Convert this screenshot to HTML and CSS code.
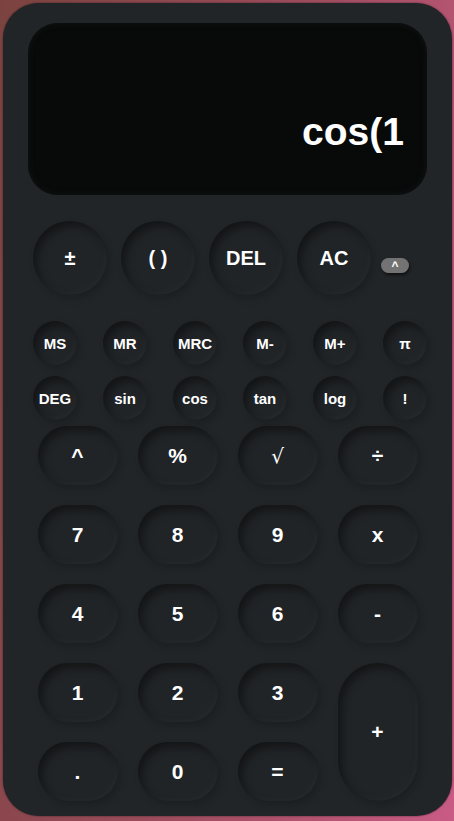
FILE: index.html
```html
<!DOCTYPE html>
<html lang="en">
<head>
<meta charset="utf-8">
<title>Calculator</title>
<link rel="stylesheet" href="styles.css">
</head>
<body>
<div class="calc">
  <div class="display"><span class="expr">cos(1</span></div>

  <div class="top-row">
    <div class="top-keys">
      <button class="key big">±</button>
      <button class="key big">( )</button>
      <button class="key big">DEL</button>
      <button class="key big">AC</button>
    </div>
    <button class="toggle">^</button>
  </div>

  <div class="sci">
    <button class="key small">MS</button>
    <button class="key small">MR</button>
    <button class="key small">MRC</button>
    <button class="key small">M-</button>
    <button class="key small">M+</button>
    <button class="key small">π</button>
    <button class="key small">DEG</button>
    <button class="key small">sin</button>
    <button class="key small">cos</button>
    <button class="key small">tan</button>
    <button class="key small">log</button>
    <button class="key small">!</button>
  </div>

  <div class="pad">
    <button class="key oval">^</button>
    <button class="key oval">%</button>
    <button class="key oval"><span class="thin">√</span></button>
    <button class="key oval">÷</button>
    <button class="key oval">7</button>
    <button class="key oval">8</button>
    <button class="key oval">9</button>
    <button class="key oval">x</button>
    <button class="key oval">4</button>
    <button class="key oval">5</button>
    <button class="key oval">6</button>
    <button class="key oval">-</button>
    <button class="key oval">1</button>
    <button class="key oval">2</button>
    <button class="key oval">3</button>
    <button class="key oval plus">+</button>
    <button class="key oval">.</button>
    <button class="key oval">0</button>
    <button class="key oval">=</button>
  </div>
</div>
</body>
</html>
```

FILE: styles.css
```css
html, body {
  margin: 0;
  height: 100%;
}
body {
  padding: 3px 2px 0 3px;
  box-sizing: border-box;
  background: linear-gradient(100deg, #7b433f 0%, #9c4c5c 50%, #c95b84 100%);
  font-family: "Liberation Sans", Arial, sans-serif;
  font-weight: bold;
  color: #fff;
}
.calc {
  width: 449px;
  height: 813px;
  box-sizing: border-box;
  padding: 20px 25px 0 25px;
  background: #222528;
  border-radius: 36px;
  box-shadow: 0 0 2px rgba(0,0,0,0.6);
  display: flex;
  flex-direction: column;
}
.display {
  height: 172px;
  box-sizing: border-box;
  background: #080a0a;
  border-radius: 30px;
  box-shadow: inset 0 0 6px rgba(20,22,22,0.9);
  display: flex;
  justify-content: flex-end;
  align-items: flex-end;
  padding: 0 23px 44px 0;
}
.expr {
  font-size: 39px;
  line-height: 1;
}
.key {
  border: none;
  padding: 0;
  margin: 0;
  color: #fff;
  font-family: inherit;
  font-weight: bold;
  background: #212427;
  box-shadow: inset 4px 5px 9px rgba(0,0,0,0.45),
              inset -2px -2px 6px rgba(255,255,255,0.03),
              3px 4px 7px rgba(0,0,0,0.18);
  display: flex;
  align-items: center;
  justify-content: center;
}
.top-row {
  display: flex;
  align-items: center;
  gap: 10px;
  margin-top: 26px;
  padding-left: 5px;
}
.top-keys {
  display: flex;
  gap: 14px;
}
.big {
  width: 74px;
  height: 74px;
  border-radius: 50%;
  font-size: 20px;
}
.toggle {
  width: 28px;
  height: 15px;
  margin-top: 14px;
  border: none;
  padding: 0;
  border-radius: 8px;
  background: #737373;
  box-shadow: 1px 2px 3px rgba(0,0,0,0.6);
  color: #fff;
  font-family: inherit;
  font-weight: bold;
  font-size: 12px;
  line-height: 17px;
}
.sci {
  display: grid;
  grid-template-columns: repeat(6, 44px);
  grid-auto-rows: 44px;
  column-gap: 26px;
  row-gap: 11px;
  margin-top: 26px;
  padding-left: 5px;
}
.small {
  width: 44px;
  height: 44px;
  border-radius: 50%;
  font-size: 15px;
}
.pad {
  display: grid;
  grid-template-columns: repeat(4, 80px);
  grid-auto-rows: 59px;
  gap: 20px;
  justify-content: center;
  margin-top: 6px;
}
.oval {
  border-radius: 30px;
  font-size: 21px;
}
.thin {
  font-family: "DejaVu Serif", serif;
  font-weight: normal;
  font-size: 20px;
}
.plus {
  grid-column: 4;
  grid-row: 4 / span 2;
  border-radius: 40px;
}
```
